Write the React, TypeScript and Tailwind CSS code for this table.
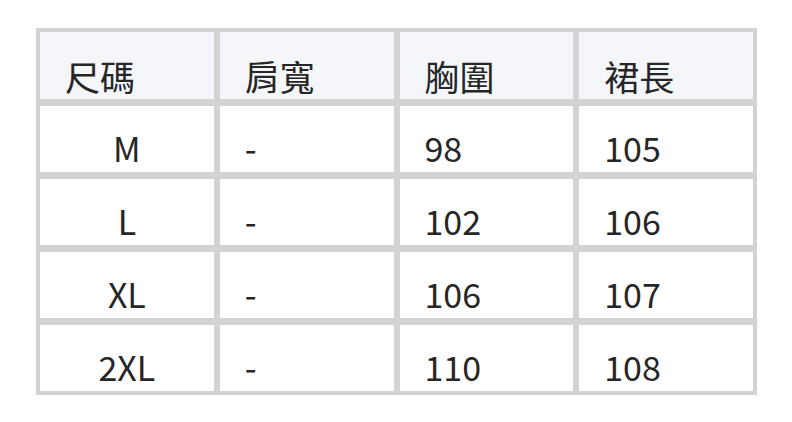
const header = ["尺碼", "肩寬", "胸圍", "裙長"];

const rows = [
  ["M", "-", "98", "105"],
  ["L", "-", "102", "106"],
  ["XL", "-", "106", "107"],
  ["2XL", "-", "110", "108"],
];

const App = () => {
  return (
    <div
      className="w-[792px] h-[422px] bg-white pt-[28px] pl-[36px]"
      style={{ fontFamily: '"Noto Sans CJK TC", "Noto Sans", sans-serif' }}
    >
      <div className="w-[721px] bg-[#d3d3d3] p-[4px] grid grid-cols-4 gap-x-[6px] gap-y-[7px] text-[34px] leading-none text-[#262626]">
        {/* header */}
        {header.map((h) => (
          <div key={h} className="h-[67px] bg-[#f5f6fa] flex items-end pb-[6px] pl-[25px] text-[35px]">
            {h}
          </div>
        ))}

        {/* body */}
        {rows.map((row) =>
          row.map((cell, i) => (
            <div
              key={row[0] + i}
              className={`h-[66px] bg-white flex items-end pb-[7px] ${
                i === 0 ? "justify-center" : "pl-[25px]"
              }`}
            >
              {cell}
            </div>
          ))
        )}
      </div>
    </div>
  );
};

export default App;
